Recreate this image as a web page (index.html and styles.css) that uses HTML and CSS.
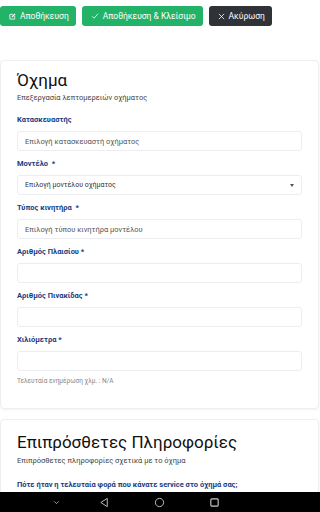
FILE: index.html
```html
<!DOCTYPE html>
<html lang="el">
<head>
  <meta charset="UTF-8" />
  <meta name="viewport" content="width=device-width, initial-scale=1.0"/>
  <title>Όχημα</title>
  <link rel="stylesheet" href="styles.css">
</head>
<body>

  <div class="screen">
    <div class="content">
      <div class="toolbar">
        <button class="btn btn-green">
          <svg viewBox="0 0 16 16" width="7" height="7"><path d="M2 3h7M2 3v11h11V7" fill="none" stroke="#fff" stroke-width="1.8"/><path d="M6 10l1-3 6-6 2 2-6 6z" fill="#fff"/></svg>
          Αποθήκευση
        </button>
        <button class="btn btn-green">
          <svg viewBox="0 0 16 16" width="8" height="8"><path d="M2 8.5l4 4L14 3.5" fill="none" stroke="#fff" stroke-width="1.6"/></svg>
          Αποθήκευση &amp; Κλείσιμο
        </button>
        <button class="btn btn-dark">
          <svg viewBox="0 0 16 16" width="7" height="7"><path d="M2 2l12 12M14 2L2 14" fill="none" stroke="#fff" stroke-width="1.8"/></svg>
          Ακύρωση
        </button>
      </div>

      <div class="card">
        <h2>Όχημα</h2>
        <p class="sub">Επεξεργασία λεπτομερειών οχήματος</p>

        <div class="field">
          <label>Κατασκευαστής</label>
          <div class="input">Επιλογή κατασκευαστή οχήματος</div>
        </div>
        <div class="field">
          <label>Μοντέλο &nbsp;*</label>
          <div class="input select">Επιλογή μοντέλου οχήματος <span class="caret"></span></div>
        </div>
        <div class="field">
          <label>Τύπος κινητήρα &nbsp;*</label>
          <div class="input">Επιλογή τύπου κινητήρα μοντέλου</div>
        </div>
        <div class="field">
          <label>Αριθμός Πλαισίου *</label>
          <div class="input"></div>
        </div>
        <div class="field">
          <label>Αριθμός Πινακίδας *</label>
          <div class="input"></div>
        </div>
        <div class="field">
          <label>Χιλιόμετρα *</label>
          <div class="input"></div>
          <p class="help">Τελευταία ενημέρωση χλμ. : N/A</p>
        </div>
      </div>

      <div class="card card-extra">
        <h2>Επιπρόσθετες Πληροφορίες</h2>
        <p class="sub">Επιπρόσθετες πληροφορίες σχετικά με το όχημα</p>
        <div class="field">
          <label>Πότε ήταν η τελευταία φορά που κάνατε service στο όχημά σας;</label>
        </div>
      </div>
    </div>

    <div class="navbar">
      <svg class="nav-down" viewBox="0 0 12 12" width="9" height="9"><path d="M3 4.5l3 3 3-3" fill="none" stroke="#ccc" stroke-width="1"/></svg>
      <svg viewBox="0 0 12 12" width="11" height="11"><path d="M9 1.5v9L2 6z" fill="none" stroke="#ccc" stroke-width="1"/></svg>
      <svg viewBox="0 0 12 12" width="11" height="11"><circle cx="6" cy="6" r="4.5" fill="none" stroke="#ccc" stroke-width="1"/></svg>
      <svg viewBox="0 0 12 12" width="11" height="11"><rect x="2" y="2" width="8" height="8" rx="1" fill="none" stroke="#ccc" stroke-width="1.2"/></svg>
    </div>
  </div>

</body>
</html>
```

FILE: styles.css
```css
body {
  font-family: Roboto, "Noto Sans", sans-serif;
  background-color: #fff;
  margin: 0;
  color: #222;
}

.screen {
  height: 100vh;
  display: flex;
  flex-direction: column;
}

.content {
  flex: 1;
  overflow: hidden;
}

.toolbar {
  display: flex;
  gap: 6px;
  padding: 6px 0 0 0;
}

.btn {
  display: flex;
  align-items: center;
  gap: 4px;
  height: 20px;
  padding: 0 7px 0 9px;
  border: none;
  border-radius: 3px;
  color: #fff;
  font-family: inherit;
  font-size: 8.5px;
}

.btn-green {
  background-color: #22b369;
}

.btn-dark {
  background-color: #2f3237;
}

.card {
  margin: 34px 1px 10px 0;
  border: 1px solid #eceef0;
  border-radius: 4px;
  padding: 8px 16px 15px 16px;
  box-shadow: 0 1px 3px rgba(0, 0, 0, 0.05);
}

.card-extra {
  margin-top: 0;
  padding-top: 11px;
}

.card h2 {
  margin: 0;
  font-size: 17px;
  font-weight: 400;
  line-height: 22px;
  color: #111;
}

.sub {
  margin: 2px 0 12px 0;
  font-size: 7.5px;
  line-height: 10px;
  color: #444;
}

.card-extra .sub {
  margin-top: 3px;
  margin-bottom: 14px;
}

.field {
  margin-bottom: 8px;
}

.field label {
  display: block;
  font-size: 7.5px;
  font-weight: 700;
  line-height: 10px;
  color: #173c80;
  margin-bottom: 6px;
}

.input {
  height: 18px;
  border: 1px solid #ebedf0;
  border-radius: 3px;
  display: flex;
  align-items: center;
  padding: 0 7px;
  font-size: 7.5px;
  color: #555;
}

.select {
  justify-content: space-between;
  font-size: 7px;
  color: #333;
}

.caret {
  width: 0;
  height: 0;
  border-left: 2px solid transparent;
  border-right: 2px solid transparent;
  border-top: 3px solid #555;
}

.help {
  margin: 6px 0 0 0;
  font-size: 6.5px;
  color: #888;
}

.navbar {
  height: 20px;
  background: #000;
  display: flex;
  align-items: center;
  gap: 44px;
  padding-left: 52px;
}

.nav-down {
  margin-right: -6px;
}
```
